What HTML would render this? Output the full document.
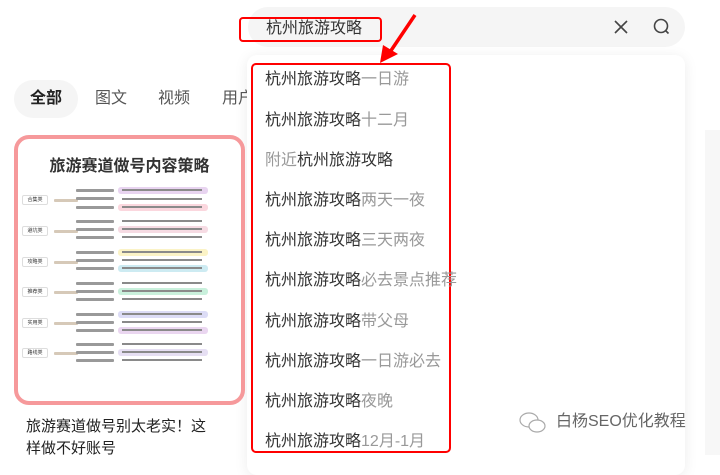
<!DOCTYPE html>
<html><head><meta charset="utf-8"><style>
*{margin:0;padding:0;box-sizing:border-box}
body{width:720px;height:455px;overflow:hidden;background:#fff;font-family:"Liberation Sans","Noto Sans CJK SC",sans-serif;position:relative}
.a{position:absolute}
.search{left:248px;top:7px;width:437px;height:40px;background:#f5f5f5;border-radius:20px}
.panel{left:247px;top:55px;width:438px;height:420px;background:#fff;border-radius:10px;box-shadow:0 2px 14px rgba(0,0,0,.08)}
.item{position:absolute;left:265px;font-size:16px;color:#333;white-space:nowrap;line-height:20px}
.item span{color:#999}
.tab{position:absolute;top:89px;font-size:16px;color:#555;line-height:20px;white-space:nowrap}
.card{left:14px;top:135px;width:231px;height:270px;border:4px solid #f6999b;border-radius:15px;background:#fff;overflow:hidden}
.lbl{position:absolute;left:4px;width:26px;height:10px;border:1px solid #ddd;border-radius:2px;font-size:5px;line-height:8px;text-align:center;color:#333}
.sub{position:absolute;left:36px;width:24px;height:3px;background:#d6c9b8;border-radius:1px}
.r{position:absolute;left:58px;width:38px;height:3px;background:#999;border-radius:1px}
.h{position:absolute;left:100px;width:90px;height:7px;border-radius:3px}
.t{position:absolute;left:104px;width:80px;height:2px;background:#8a8a8a}
</style></head><body>
<div class="a search"></div>
<div class="a" style="left:266px;top:19px;font-size:16px;color:#333;line-height:20px">杭州旅游攻略</div>
<div class="a" style="left:239px;top:17px;width:143px;height:25px;border:2px solid #f00;border-radius:4px"></div>
<svg class="a" style="left:607px;top:17px" width="70" height="20"><path d="M8 4l12 12M20 4L8 16" stroke="#444" stroke-width="1.6"/><circle cx="54" cy="9" r="6.5" fill="none" stroke="#444" stroke-width="1.6"/><path d="M58.5 13.5l3 3" stroke="#444" stroke-width="1.6"/></svg>
<div class="a panel"></div>
<svg class="a" style="left:370px;top:10px" width="60" height="60"><path d="M45 5L18 45" stroke="#f00" stroke-width="3.5"/><path d="M10 53L13 35L28 44Z" fill="#f00"/></svg>
<div class="a" style="left:251px;top:63px;width:200px;height:390px;border:2px solid #f00;border-radius:5px"></div>
<div class="item" style="top:70px">杭州旅游攻略<span>一日游</span></div>
<div class="item" style="top:111px">杭州旅游攻略<span>十二月</span></div>
<div class="item" style="top:151px"><span>附近</span>杭州旅游攻略</div>
<div class="item" style="top:191px">杭州旅游攻略<span>两天一夜</span></div>
<div class="item" style="top:231px">杭州旅游攻略<span>三天两夜</span></div>
<div class="item" style="top:271px">杭州旅游攻略<span>必去景点推荐</span></div>
<div class="item" style="top:312px">杭州旅游攻略<span>带父母</span></div>
<div class="item" style="top:352px">杭州旅游攻略<span>一日游必去</span></div>
<div class="item" style="top:392px">杭州旅游攻略<span>夜晚</span></div>
<div class="item" style="top:432px">杭州旅游攻略<span>12月-1月</span></div>
<div class="a" style="left:14px;top:80px;width:64px;height:38px;background:#f5f5f5;border-radius:19px"></div>
<div class="tab" style="left:30px;color:#222;font-weight:bold">全部</div>
<div class="tab" style="left:95px">图文</div>
<div class="tab" style="left:158px">视频</div>
<div class="tab" style="left:222px;width:25px;overflow:hidden">用户</div>
<div class="a card">
<div class="a" style="left:0;top:18px;width:223px;text-align:center;font-size:16px;font-weight:bold;color:#333;line-height:20px">旅游赛道做号内容策略</div>
<div class="a" style="left:0;top:0;width:223px;height:262px">
<div class="lbl" style="top:56px">合集类</div><div class="sub" style="top:60px"></div>
<div class="h" style="top:48px;background:#e8d4f0"></div><div class="t" style="top:50px"></div><div class="r" style="top:50px"></div>
<div class="r" style="top:58px"></div><div class="t" style="top:59px"></div>
<div class="h" style="top:65px;background:#fbd7de"></div><div class="t" style="top:67px"></div><div class="r" style="top:67px"></div>
<div class="lbl" style="top:87px">避坑类</div><div class="sub" style="top:91px"></div>
<div class="r" style="top:81px"></div><div class="t" style="top:81px"></div>
<div class="h" style="top:87px;background:#f6dbe3"></div><div class="t" style="top:89px"></div><div class="r" style="top:89px"></div>
<div class="r" style="top:97px"></div><div class="t" style="top:97px"></div>
<div class="lbl" style="top:118px">攻略类</div><div class="sub" style="top:122px"></div>
<div class="h" style="top:110px;background:#fbf3c6"></div><div class="t" style="top:112px"></div><div class="r" style="top:112px"></div>
<div class="r" style="top:120px"></div><div class="t" style="top:120px"></div>
<div class="h" style="top:126px;background:#cdebf2"></div><div class="t" style="top:128px"></div><div class="r" style="top:128px"></div>
<div class="lbl" style="top:148px">推荐类</div><div class="sub" style="top:152px"></div>
<div class="r" style="top:143px"></div><div class="t" style="top:143px"></div>
<div class="h" style="top:149px;background:#c9f0dc"></div><div class="t" style="top:151px"></div><div class="r" style="top:151px"></div>
<div class="r" style="top:159px"></div><div class="t" style="top:159px"></div>
<div class="lbl" style="top:179px">实用类</div><div class="sub" style="top:183px"></div>
<div class="h" style="top:172px;background:#dcdcf6"></div><div class="t" style="top:174px"></div><div class="r" style="top:174px"></div>
<div class="r" style="top:182px"></div><div class="t" style="top:182px"></div>
<div class="h" style="top:188px;background:#ead6f0"></div><div class="t" style="top:190px"></div><div class="r" style="top:190px"></div>
<div class="lbl" style="top:209px">路线类</div><div class="sub" style="top:213px"></div>
<div class="r" style="top:204px"></div><div class="t" style="top:204px"></div>
<div class="h" style="top:210px;background:#e6dff3"></div><div class="t" style="top:212px"></div><div class="r" style="top:212px"></div>
<div class="r" style="top:220px"></div><div class="t" style="top:220px"></div>
</div>
</div>
<div class="a" style="left:26px;top:416px;font-size:15px;color:#222;line-height:22px;width:190px">旅游赛道做号别太老实！这样做不好账号</div>
<div class="a" style="left:705px;top:130px;width:15px;height:325px;background:#f7f7f7"></div>
<svg class="a" style="left:518px;top:410px" width="30" height="26"><ellipse cx="11" cy="10" rx="9" ry="7" fill="none" stroke="#aaa" stroke-width="1.2"/><ellipse cx="19" cy="16" rx="8" ry="6" fill="#fff" stroke="#aaa" stroke-width="1.2"/></svg>
<div class="a" style="left:556px;top:412px;font-size:16px;color:#666;line-height:20px">白杨SEO优化教程</div>
</body></html>
